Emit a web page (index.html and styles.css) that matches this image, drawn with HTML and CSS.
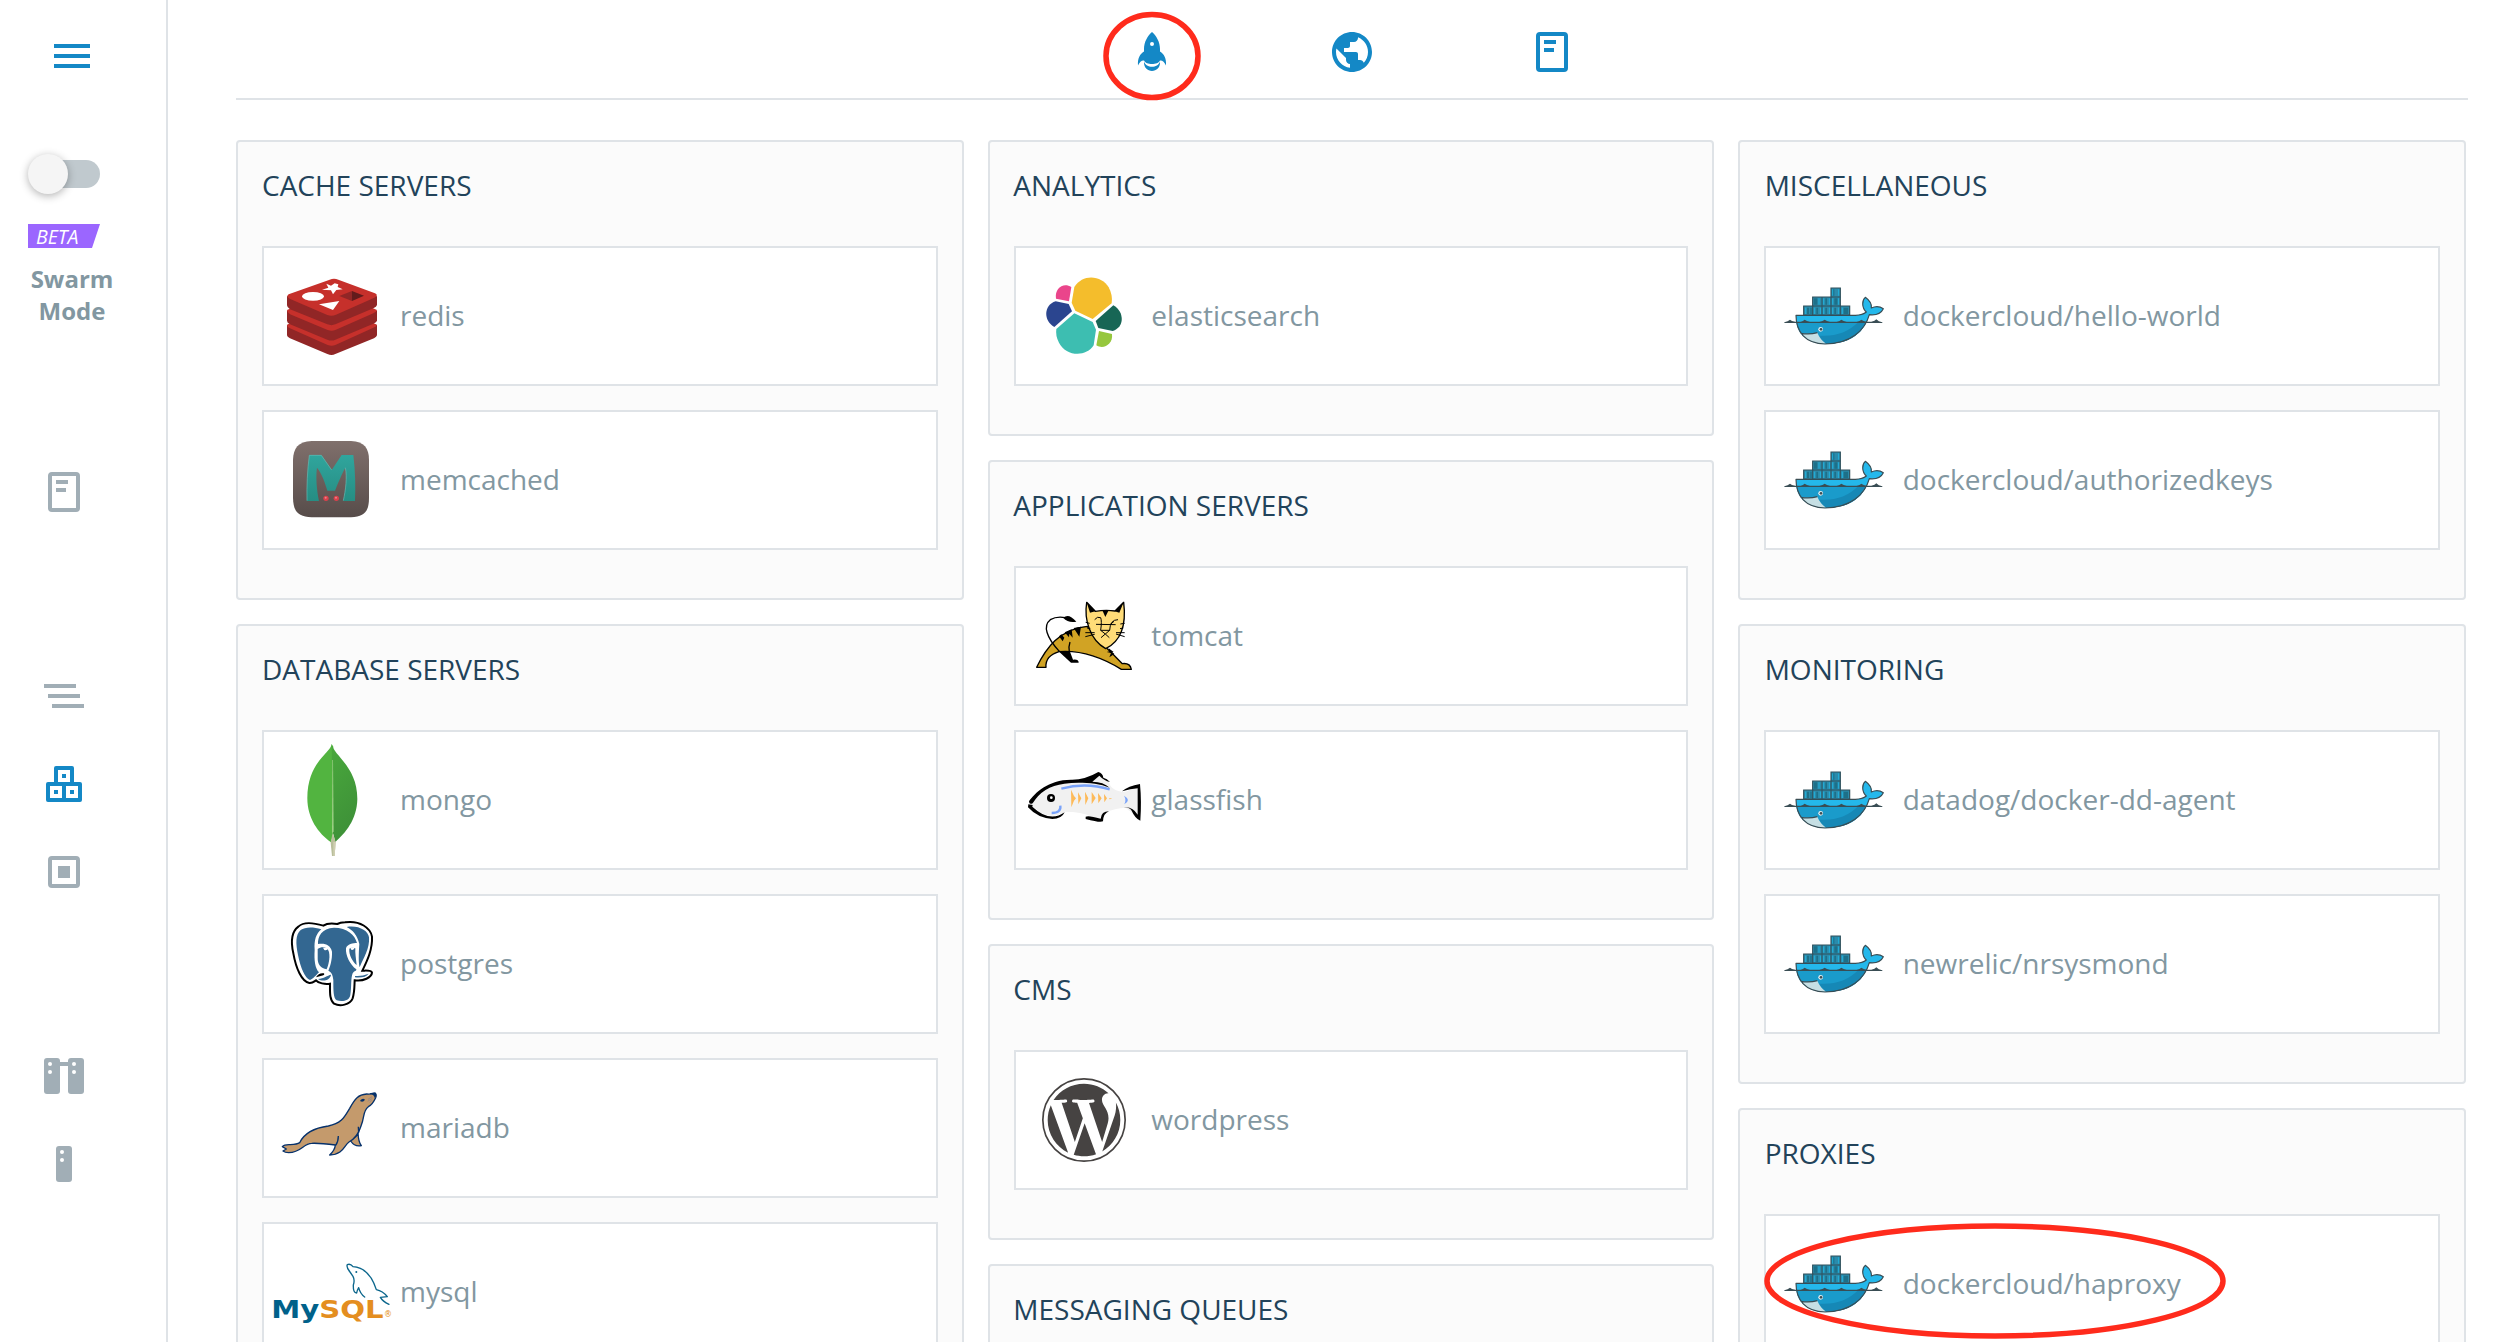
FILE: index.html
```html
<!DOCTYPE html>
<html lang="en">
<head>
<meta charset="utf-8">
<title>Create a service</title>
<link rel="stylesheet" href="styles.css">
</head>
<body>
<svg class="sprite" aria-hidden="true">
  <symbol id="docker" viewBox="132 378 360 360">
    <path fill="#24b8eb" d="M198 556H376Q398 555 409 546C394 532 396 510 406 502C417 510 426 520 424 534C436 528 450 529 460 536C452 553 436 556 418 554C405 602 360 642 285 642C225 640 198 605 198 556Z"/>
    <path fill="#1a9bcb" d="M199 577H409C390 618 350 642 285 642C230 640 203 612 199 577Z"/>
    <path fill="#1688b6" d="M409 577C390 618 350 642 285 642Q272 630 268 617Q340 622 384 577Z"/>
    <path fill="#c6dfe4" d="M212 610Q240 614 262 608Q270 628 288 641Q235 644 212 610Z"/>
    <path fill="none" stroke="#394d54" stroke-width="3.5" stroke-linejoin="round" d="M198 556H376Q398 555 409 546C394 532 396 510 406 502C417 510 426 520 424 534C436 528 450 529 460 536C452 553 436 556 418 554C405 602 360 642 285 642C225 640 198 605 198 556ZM212 610Q240 614 262 608"/>
    <path fill="#2b8bab" stroke="#31515c" stroke-width="3.5" d="M221 528H248V501H303V474H331V528H359V555H221Z"/>
    <path fill="#1d7089" d="M231 533h6v19h-6zM241 533h4v19h-4zM259 533h5v19h-5zM286 533h5v19h-5zM313 533h5v19h-5zM341 533h13v19h-13zM252 505h10v19h-10zM286 505h5v19h-5zM313 505h10v19h-10zM307 478h6v19h-6z"/>
    <path fill="none" stroke="#21b1dc" stroke-width="3" d="M227 533v19M253 533v19M271 533v19M281 533v19M298 533v19M308 533v19M325 533v19M337 533v19M267 505v19M281 505v19M298 505v19M308 505v19M325 505v19M308 478v19M326 478v19"/>
    <path fill="none" stroke="#31515c" stroke-width="3" d="M248 528H331M303 501H331M248 528V555M276 501V555M303 501V555M331 528V555"/>
    <path fill="#394d54" d="M163 577Q174 574 180 569Q184 574 196 575H212Q219 574 224 569Q230 574 240 575H268Q279 574 284 569Q290 574 300 575H320Q330 574 334 569Q340 574 350 575H380Q390 574 394 569Q400 574 410 575H424Q435 574 439 568Q445 575 457 577V579H163Z"/>
    <circle cx="272" cy="598" r="7" fill="#e7eef0"/><circle cx="273" cy="598" r="4" fill="#394d54"/>
  </symbol>
  <symbol id="document" viewBox="0 0 48 48">
    <path fill="currentColor" fill-rule="evenodd" d="M12 4H36A4 4 0 0 1 40 8V40A4 4 0 0 1 36 44H12A4 4 0 0 1 8 40V8A4 4 0 0 1 12 4ZM12 8V40H36V8ZM16 12H28V16H16ZM16 20H26V24H16Z"/>
  </symbol>
</svg>

<div class="app">
  <aside class="sidebar">
    <button class="menu" aria-label="Menu"><span></span><span></span><span></span></button>
    <div class="swarm">
      <div class="toggle"><span class="thumb"></span></div>
      <div class="beta">BETA</div>
      <div class="swarm-label">Swarm<br>Mode</div>
    </div>
    <nav class="nav">
      <div class="nav-group">
        <a class="nav-item"><svg><use href="#document"/></svg></a>
      </div>
      <div class="nav-group">
        <a class="nav-item"><svg viewBox="0 0 48 48"><path fill="currentColor" d="M4 12H36V16H4ZM8 22H40V26H8ZM12 32H44V36H12Z"/></svg></a>
        <a class="nav-item active"><svg viewBox="0 0 48 48"><path fill="currentColor" fill-rule="evenodd" d="M16 6H32A2 2 0 0 1 34 8V22H40A2 2 0 0 1 42 24V40A2 2 0 0 1 40 42H8A2 2 0 0 1 6 40V24A2 2 0 0 1 8 22H14V8A2 2 0 0 1 16 6ZM18 10V22H30V10ZM22 14H26V18H22ZM10 26V38H22V26ZM14 30H18V34H14ZM26 26V38H38V26ZM30 30H34V34H30Z"/></svg></a>
        <a class="nav-item"><svg viewBox="0 0 48 48"><path fill="currentColor" fill-rule="evenodd" d="M12 8H36A4 4 0 0 1 40 12V36A4 4 0 0 1 36 40H12A4 4 0 0 1 8 36V12A4 4 0 0 1 12 8ZM12 12V36H36V12ZM18 18H30V30H18Z"/></svg></a>
      </div>
      <div class="nav-group">
        <a class="nav-item"><svg viewBox="0 0 48 48"><g fill="currentColor"><rect x="4" y="6" width="16" height="36" rx="3"/><rect x="28" y="6" width="16" height="36" rx="3"/><path d="M19 10H29V14H19Z"/></g><g fill="#fff"><circle cx="10" cy="12" r="2"/><circle cx="10" cy="20" r="2"/><circle cx="34" cy="12" r="2"/><circle cx="34" cy="20" r="2"/></g></svg></a>
        <a class="nav-item"><svg viewBox="0 0 48 48"><rect x="16" y="6" width="16" height="36" rx="3" fill="currentColor"/><g fill="#fff"><circle cx="22" cy="12" r="2"/><circle cx="22" cy="20" r="2"/></g></svg></a>
      </div>
    </nav>
  </aside>

  <main class="content">
    <div class="tabs">
      <a class="tab"><svg viewBox="0 0 48 48"><path fill="currentColor" fill-rule="evenodd" d="M24 4C28.500 8 32 14 32 21V23.500C36 26 38.500 30 38 37.500C36.500 34 34 32 32 32.500C30 37.300 18 37.300 16 32.500C14 32 11.500 34 10 37.500C9.500 30 12 26 16 23.500V21C16 14 19.500 8 24 4ZM24 14A2 2 0 0 0 24 18A2 2 0 0 0 24 14ZM16 33.500C18 40.500 30 40.500 32 33.500C33 46 15 46 16 33.500Z"/></svg>
        <svg class="mark mark-tab" viewBox="0 0 98 90"><ellipse cx="49" cy="45" rx="46" ry="41.500"/></svg></a>
      <a class="tab"><svg viewBox="0 0 24 24"><path fill="currentColor" d="M12 2C6.480 2 2 6.480 2 12s4.480 10 10 10 10-4.480 10-10S17.520 2 12 2zm-1 17.930c-3.950-.49-7-3.850-7-7.930 0-.62.080-1.210.21-1.790L9 15v1c0 1.100.9 2 2 2v1.930zm6.900-2.540c-.26-.81-1-1.390-1.900-1.390h-1v-3c0-.55-.45-1-1-1H8v-2h2c.55 0 1-.45 1-1V7h2c1.100 0 2-.9 2-2v-.41c2.930 1.190 5 4.060 5 7.410 0 2.080-.8 3.970-2.100 5.390z"/></svg></a>
      <a class="tab"><svg><use href="#document"/></svg></a>
    </div>

    <div class="board">
      <div class="column">
        <section class="panel">
          <h2>CACHE SERVERS</h2>
          <div class="card">
            <svg class="logo" viewBox="126 378 360 360">
              <path fill="#912626" d="M171 586L306 540L441 586V616Q440 621 432 625L316 672Q305 678 292 672L180 625Q171 621 171 616Z"/>
              <path fill="#c6302b" d="M171 584L306 520L441 584Q440 590 430 593L316 645Q305 650 293 645L180 595Q171 591 171 584Z"/>
              <path fill="#912626" d="M171 542L306 500L441 542V572Q440 577 430 581L316 629Q305 634 292 629L180 583Q171 578 171 572Z"/>
              <path fill="#c6302b" d="M171 540L306 480L441 540Q440 546 430 550L316 600Q305 605 293 600L180 553Q171 547 171 540Z"/>
              <path fill="#912626" d="M171 499L306 470L441 499V525Q440 531 430 535L316 583Q305 588 292 583L180 538Q171 532 171 526Z"/>
              <path fill="#c6302b" d="M176 493L299 449Q312 443 325 449L435 490Q447 496 433 503L318 554Q305 560 292 555L179 506Q167 499 176 493Z"/>
              <ellipse cx="249" cy="499" rx="33" ry="13" fill="#fff"/>
              <path fill="#fff" d="M289 461L303 467L314 460L325 463L323 471L338 478L319 480L309 493L303 481L276 479L295 473ZM267 523L328 513L309 540Z"/>
              <path fill="#912626" d="M328 498L366 483V513Z"/><path fill="#621b1c" d="M366 483L402 497L366 513Z"/>
            </svg>
            <span>redis</span>
          </div>
          <div class="card">
            <svg class="logo" viewBox="126 870 360 360">
              <defs>
                <linearGradient id="mc-bg" x2="0" y2="1"><stop stop-color="#80706c"/><stop offset="1" stop-color="#574c4a"/></linearGradient>
                <linearGradient id="mc-m" x2="0" y2="1"><stop stop-color="#30a59d"/><stop offset="1" stop-color="#268d83"/></linearGradient>
              </defs>
              <path fill="url(#mc-bg)" d="M245 933H363C403 935 417 955 417 990V1104C417 1145 403 1159 363 1162H245C204 1159 190 1145 189 1104V990C190 955 204 935 245 933Z"/>
              <path fill="url(#mc-m)" d="M238 975H274L305 1020L335 975H370C376 1025 377 1070 375 1113H340C347 1080 352 1040 346 1013C336 1030 324 1060 315 1082H292C284 1055 275 1030 261 1013C257 1040 260 1080 267 1113H231C230 1070 232 1020 238 975Z"/>
              <path fill="none" stroke="#67bbb3" stroke-width="2" d="M231 1112C230 1070 232 1020 238 976H274L305 1020M340 1112C347 1080 352 1040 346 1013"/>
              <circle cx="288" cy="1105" r="8" fill="#d9414c"/><circle cx="319" cy="1105" r="8" fill="#d9414c"/><circle cx="287" cy="1103" r="3" fill="#ee8087"/><circle cx="318" cy="1103" r="3" fill="#ee8087"/>
            </svg>
            <span>memcached</span>
          </div>
        </section>
        <section class="panel">
          <h2>DATABASE SERVERS</h2>
          <div class="card">
            <svg class="logo" viewBox="66 60 360 360">
              <defs><linearGradient id="leaf" x2=".3" y2="1"><stop stop-color="#49a83c"/><stop offset="1" stop-color="#3e9138"/></linearGradient></defs>
              <path fill="#52b440" d="M245 72C242 100 172 125 172 235C172 295 205 340 243 367L250 340V80Z"/>
              <path fill="url(#leaf)" d="M245 72C252 108 322 140 322 237C321 300 285 340 256 366L248 335Z"/>
              <path fill="#9ccf84" d="M247 120L249 120L251 335L246 340Z"/>
              <path fill="#b9be9b" d="M248 338L257 366L254 408H246L242 368Z"/>
              <path fill="#d0cfb2" d="M250 365L257 366L254 408H250Z"/>
            </svg>
            <span>mongo</span>
          </div>
          <div class="card">
            <svg class="logo" viewBox="66 552 360 360">
              <path fill="#fff" stroke="#000" stroke-width="6" d="M220 617C190 608 160 605 145 620C125 635 122 665 130 700C138 745 155 785 178 789C188 790 192 785 198 781C205 790 225 793 240 791C240 815 238 840 252 851C270 860 300 855 308 835C314 815 313 800 314 781C340 785 365 772 366 758C364 750 350 752 337 752C350 725 368 690 366 650C362 625 330 600 285 607C270 608 262 612 262 612C245 609 230 610 220 617Z"/>
              <g fill="#336791">
                <path d="M214 628C190 620 165 620 152 630C136 645 137 670 144 705C152 745 165 775 180 780C188 778 199 765 207 757C195 745 192 720 194 690C192 660 198 642 214 628Z"/>
                <path d="M252 623C215 624 203 650 204 672C225 668 242 675 246 695C247 720 240 740 235 752C246 758 248 765 250 780C250 810 250 835 260 841C275 846 298 844 301 825C305 800 302 775 308 760C313 752 320 754 319 748C300 735 286 705 288 685C291 672 310 669 321 669C315 645 292 623 252 623Z"/>
                <path d="M203 687C215 679 232 680 237 696C241 715 235 735 230 748C212 744 203 735 203 715Z"/>
                <path d="M290 621C325 615 355 632 357 652C360 685 340 715 329 742C325 730 326 700 328 672C322 645 308 630 290 621Z"/>
                <path d="M298 686Q306 679 316 685C315 700 318 715 320 735C308 725 296 705 298 686Z"/>
                <path d="M204 777C222 776 232 766 243 764C242 778 220 788 204 777ZM315 768Q335 770 356 761Q345 775 315 772Z"/>
              </g>
              <path fill="#000" d="M198 772Q207 757 222 760Q226 766 212 768Z"/>
              <path fill="#fff" d="M219 683H235Q232 693 223 690ZM300 682H315Q311 692 304 689Z"/>
            </svg>
            <span>postgres</span>
          </div>
          <div class="card">
            <svg class="logo" viewBox="66 84 360 360">
              <g fill="#c49a6c" stroke="#06316b" stroke-width="4" stroke-linejoin="round">
                <path d="M302 300Q322 290 324 278Q325 305 334 317Q314 321 302 303Z"/>
                <path d="M97 320Q103 313 121 314Q142 313 149 308C165 275 198 263 235 258C275 250 282 233 299 205C315 175 325 164 350 162Q365 163 375 159Q381 163 377 173Q368 193 355 200C337 214 345 230 333 258C325 285 311 298 297 306C282 316 280 344 239 345Q255 330 256 315Q210 309 185 310C160 310 155 337 116 338Q105 338 99 333L109 327Z"/>
              </g>
              <path fill="none" stroke="#06316b" stroke-width="4" d="M265 288Q265 305 257 316M326 278L325 260"/>
              <path fill="#06316b" d="M360 160Q375 155 378 160Q380 168 374 174Q373 164 360 163ZM331 181Q338 173 345 179Q340 188 331 184Z"/>
              <path fill="none" stroke="#868090" stroke-width="2" d="M354 178L366 170M353 184L367 175M359 188L365 180"/>
            </svg>
            <span>mariadb</span>
          </div>
          <div class="card">
            <svg class="logo" viewBox="66 576 360 360">
              <text class="mysql-word" x="64" y="833" textLength="337" lengthAdjust="spacingAndGlyphs"><tspan fill="#00618a">My</tspan><tspan fill="#e48e20">SQL</tspan></text>
              <text class="mysql-reg" x="402" y="832">®</text>
              <path fill="none" stroke="#0b668c" stroke-width="4" stroke-linejoin="round" stroke-linecap="round" d="M344 771Q331 762 326 743Q321 752 320 759Q309 759 310 735Q315 720 309 709L300 696Q288 681 292 674Q301 670 309 680C339 682 365 705 379 749Q398 753 412 770L391 772Q398 784 417 793"/>
              <circle cx="319" cy="696" r="3" fill="#0b668c"/>
            </svg>
            <span>mysql</span>
          </div>
        </section>
      </div>

      <div class="column column-middle">
        <section class="panel">
          <h2>ANALYTICS</h2>
          <div class="card">
            <svg class="logo" viewBox="132 378 360 360">
              <path fill="#f4bd2c" d="M283 471C309 428 367 437 386 472Q399 496 395 520L338 567L286 542L275 518Z"/>
              <path fill="#3dbeb1" d="M283 550L338 576L348 599L341 646C318 683 257 679 237 638Q226 618 229 597Z"/>
              <path fill="#ea458b" d="M274 471L267 514L228 506C223 475 250 456 274 471Z"/>
              <path fill="#2b458f" d="M227 514L266 522L276 544L223 591C190 574 190 525 227 514Z"/>
              <path fill="#176655" d="M400 526C434 545 434 593 398 603L355 594L347 573Z"/>
              <path fill="#96c73d" d="M357 603L396 612C400 642 371 660 349 646Z"/>
            </svg>
            <span>elasticsearch</span>
          </div>
        </section>
        <section class="panel">
          <h2>APPLICATION SERVERS</h2>
          <div class="card">
            <svg class="logo" viewBox="72 48 360 360">
              <path fill="#d1a324" stroke="#000" stroke-width="4" stroke-linejoin="round" d="M110 322C137 266 178 207 262 199L322 266Q342 285 367 311Q390 308 394 328H364C310 295 250 269 177 275Q135 288 138 322Z"/>
              <path fill="#000" d="M174 272L210 275L219 299Q236 297 236 308H213ZM177 229L188 244L193 233L184 223ZM194 217L207 232L208 221L218 233L215 208ZM221 204L238 230L243 200ZM326 265L328 276L341 276ZM320 276L333 279L328 292L343 282L333 272Z"/>
              <path fill="none" stroke="#000" stroke-width="4" d="M208 276Q205 260 210 246M178 274C139 232 128 197 151 179Q170 168 196 173"/>
              <path fill="#000" d="M190 174Q205 158 229 185Q205 190 190 174Z"/>
              <path fill="#ffdc78" stroke="#000" stroke-width="4" stroke-linejoin="round" d="M260 127L286 154Q316 149 345 153L371 127C377 175 374 238 317 266C269 239 252 178 260 127Z"/>
              <path fill="#000" d="M260 127L286 154L270 158ZM371 127L344 154L358 158ZM307 151H326L316 171Z"/>
              <path fill="none" stroke="#000" stroke-width="3" d="M284 179Q292 168 302 173Q306 183 302 211H329L316 222L302 211M316 222L303 233M316 222L328 233M329 211Q330 179 354 179M288 193L347 194M330 194L342 184M256 218H284M256 230L284 223M374 218H348M374 230L348 222M257 187L269 190M374 190L361 192M261 204L271 205M370 204L360 206"/>
            </svg>
            <span>tomcat</span>
          </div>
          <div class="card">
            <svg class="logo" viewBox="72 540 360 360">
              <path fill="#f1f1f1" d="M90 731C130 682 180 664 240 669L299 644L328 668Q332 692 375 696L417 678V776L377 743Q345 745 314 758L302 782L275 770Q245 755 194 755Q145 786 97 738Z"/>
              <path fill="#000" d="M87 724C103 700 145 659 213 659Q254 660 295 636Q308 639 310 653Q321 655 330 666Q312 662 298 647L277 665Q310 665 329 683C290 668 235 666 193 671Q128 679 98 730Q87 735 87 724ZM85 733L98 735L97 740Q149 789 194 757Q185 777 157 777Q113 774 84 742ZM366 694Q385 678 420 672Q425 724 421 782Q405 775 395 752Q388 742 371 742Q398 738 413 764V685Q392 686 366 694ZM257 770Q265 765 302 776Q304 754 327 754Q310 760 309 784Q301 789 257 777Z"/>
              <circle cx="153" cy="714" r="12" fill="#000"/><circle cx="154" cy="713" r="4" fill="#fff"/>
              <path fill="none" stroke="#79a3fa" stroke-width="7" d="M184 686Q257 666 329 688M155 759Q184 759 181 737"/>
              <path fill="#79a3fa" d="M372 707Q395 720 373 733Q380 720 372 707Z"/>
              <path fill="#fdba59" d="M213 689L222 708L228 715L222 722L214 742ZM234 697L244 715L235 733ZM255 695L265 715L256 735ZM275 696L287 714L275 733ZM294 699L305 715L295 730ZM312 702L321 715L313 727ZM328 714L337 716L328 718Z"/>
            </svg>
            <span>glassfish</span>
          </div>
        </section>
        <section class="panel">
          <h2>CMS</h2>
          <div class="card">
            <svg class="logo" viewBox="72 60 360 360">
              <circle cx="252" cy="240" r="123.500" fill="none" stroke="#464342" stroke-width="5"/>
              <path fill="#464342" transform="translate(130.800 118.800) scale(10.100)" d="M21.469 6.825c.84 1.537 1.318 3.300 1.318 5.175 0 3.979-2.156 7.456-5.363 9.325l3.295-9.527c.615-1.540.820-2.771.820-3.864 0-.405-.026-.78-.07-1.110m-7.981.105c.647-.03 1.232-.105 1.232-.105.582-.075.514-.93-.067-.899 0 0-1.755.135-2.880.135-1.064 0-2.850-.15-2.850-.15-.585-.03-.661.855-.075.885 0 0 .54.061 1.125.09l1.680 4.605-2.370 7.080L5.354 6.900c.649-.03 1.234-.1 1.234-.1.585-.075.516-.93-.065-.896 0 0-1.746.138-2.874.138-.2 0-.438-.008-.69-.015C4.911 3.150 8.235 1.215 12 1.215c2.809 0 5.365 1.072 7.286 2.833-.046-.003-.091-.009-.141-.009-1.060 0-1.812.923-1.812 1.914 0 .89.513 1.643 1.060 2.531.411.72.89 1.643.89 2.977 0 .915-.354 1.994-.821 3.479l-1.075 3.585-3.900-11.610zM12 22.784c-1.059 0-2.081-.153-3.048-.437l3.237-9.406 3.315 9.087c.024.053.05.101.078.149-1.120.393-2.325.609-3.582.609M1.211 12c0-1.564.336-3.050.935-4.390L7.290 21.709C3.694 19.960 1.212 16.271 1.211 12"/>
            </svg>
            <span>wordpress</span>
          </div>
        </section>
        <section class="panel">
          <h2>MESSAGING QUEUES</h2>
        </section>
      </div>

      <div class="column column-last">
        <section class="panel">
          <h2>MISCELLANEOUS</h2>
          <div class="card"><svg class="logo"><use href="#docker"/></svg><span>dockercloud/hello-world</span></div>
          <div class="card"><svg class="logo"><use href="#docker"/></svg><span>dockercloud/authorizedkeys</span></div>
        </section>
        <section class="panel">
          <h2>MONITORING</h2>
          <div class="card"><svg class="logo"><use href="#docker"/></svg><span>datadog/docker-dd-agent</span></div>
          <div class="card"><svg class="logo"><use href="#docker"/></svg><span>newrelic/nrsysmond</span></div>
        </section>
        <section class="panel">
          <h2>PROXIES</h2>
          <div class="card"><svg class="logo"><use href="#docker"/></svg><span>dockercloud/haproxy</span>
            <svg class="mark mark-card" viewBox="0 0 462 118"><ellipse cx="231" cy="59" rx="228" ry="55"/></svg></div>
        </section>
      </div>
    </div>
  </main>
</div>
</body>
</html>
```
FILE: styles.css
```css
* {
  box-sizing: border-box;
}

body {
  margin: 0;
  background: #fff;
  color: #8297a1;
  font-family: "Open Sans", "Noto Sans", sans-serif;
  font-size: 28px;
  overflow: hidden;
}

svg {
  display: block;
}

.sprite {
  display: none;
}

.app {
  display: flex;
  height: 1342px;
  overflow: hidden;
}

/* Sidebar */
.sidebar {
  flex: none;
  width: 168px;
  padding-top: 44px;
  border-right: 2px solid #dfe3e7;
}

.menu {
  display: flex;
  flex-direction: column;
  gap: 6px;
  width: 36px;
  margin: 0 0 86px 54px;
  padding: 0;
  border: 0;
  background: none;
}

.menu span {
  height: 4px;
  background: #1488c6;
}

.swarm {
  width: 88px;
  height: 294px;
  margin-left: 28px;
}

.toggle {
  display: flex;
  align-items: center;
  width: 72px;
  height: 40px;
}

.toggle::after {
  content: "";
  width: 52px;
  height: 28px;
  margin-left: -20px;
  border-radius: 0 14px 14px 0;
  background: #c0c9ce;
}

.thumb {
  flex: none;
  z-index: 1;
  width: 40px;
  height: 40px;
  border-radius: 50%;
  background: #f5f5f5;
  box-shadow: 0 2px 8px rgba(0, 0, 0, .3);
}

.beta {
  width: 72px;
  height: 24px;
  margin-top: 30px;
  padding-left: 8px;
  background: #9b66ff;
  clip-path: polygon(0 0, 100% 0, 64px 100%, 0 100%);
  color: #fff;
  font-size: 19.500px;
  font-style: italic;
  line-height: 25px;
}

.swarm-label {
  margin-top: 15px;
  font-size: 24px;
  font-weight: 700;
  line-height: 32px;
  text-align: center;
}

.nav {
  display: flex;
  flex-direction: column;
  gap: 116px;
}

.nav-item {
  display: flex;
  align-items: center;
  height: 88px;
  padding-left: 40px;
  color: #a1aeb6;
}

.nav-item.active {
  color: #1488c6;
}

.nav-item svg,
.tab > svg:first-child {
  width: 48px;
  height: 48px;
}

/* Main area */
.content {
  flex: none;
  width: 2300px;
  margin-left: 68px;
}

.tabs {
  display: flex;
  justify-content: center;
  width: 2232px;
  height: 100px;
  padding-top: 28px;
  border-bottom: 2px solid #dfe3e7;
}

.tab {
  position: relative;
  display: flex;
  justify-content: center;
  width: 200px;
  color: #1488c6;
}

.board {
  display: grid;
  grid-template-columns: 728px 726px 728px;
  gap: 24px;
  padding-top: 40px;
}

.column {
  display: flex;
  flex-direction: column;
  gap: 24px;
}

.panel {
  display: flex;
  flex-direction: column;
  gap: 24px;
  min-height: 296px;
  padding: 24px 24px 48px;
  border: 2px solid #dfe3e7;
  border-radius: 4px;
  background: #fbfbfb;
}

.panel h2 {
  height: 38px;
  margin: 0 0 18px;
  color: #22435a;
  font-size: 28px;
  font-weight: 400;
  line-height: 38px;
}

.card {
  position: relative;
  display: flex;
  align-items: center;
  gap: 8px;
  height: 140px;
  padding-left: 8px;
  border: 2px solid #dfe3e7;
  background: #fff;
}

.card span {
  padding-bottom: 2px;
}

.column-middle h2,
.column-middle .card span {
  margin-left: -.7px;
}

.column-last h2,
.column-last .card span {
  margin-left: .7px;
}

.logo {
  flex: none;
  width: 120px;
  height: 120px;
}

.mysql-word {
  font: 700 72px "DejaVu Sans", sans-serif;
}

.mysql-reg {
  fill: #e48e20;
  font: 24px "DejaVu Sans", sans-serif;
}

/* Hand-drawn highlights over the interface */
.mark {
  position: absolute;
  overflow: visible;
  fill: none;
  stroke: #ff2b1c;
  stroke-width: 5.500px;
}

.mark-tab {
  top: -17px;
  left: 51px;
  width: 98px;
  height: 90px;
}

.mark-card {
  top: 6px;
  left: -2px;
  width: 462px;
  height: 118px;
}
```
